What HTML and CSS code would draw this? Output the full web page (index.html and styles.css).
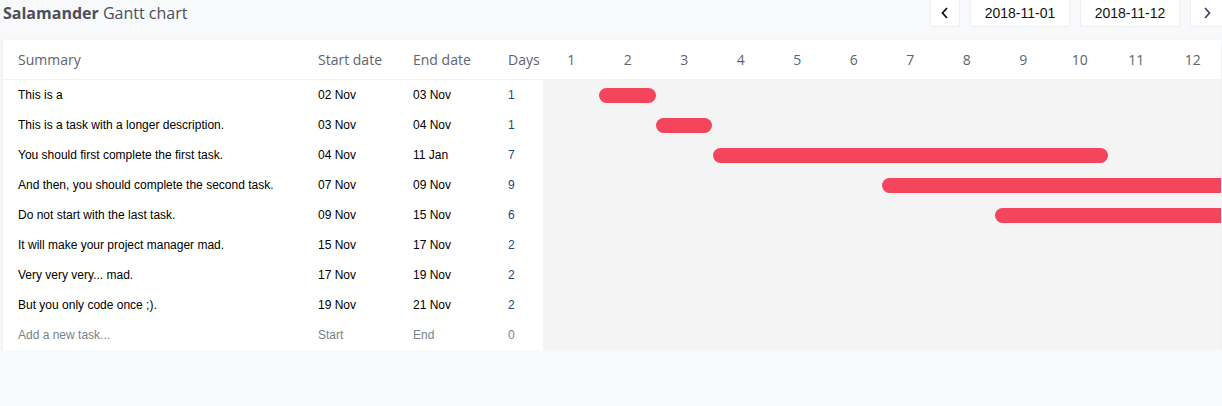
FILE: index.html
```html
<!DOCTYPE html>
<html>
<head>
<meta charset="utf-8">
<link rel="stylesheet" href="styles.css">
</head>
<body>
<div class="page">
  <div class="topbar">
    <h1 class="title"><b>Salamander</b> Gantt chart</h1>
    <div class="nav">
      <button class="btn chev chev-left" aria-label="Previous">
        <svg width="10" height="14" viewBox="0 0 10 14"><polyline points="7,2 2.5,7 7,12" fill="none" stroke="#111" stroke-width="1.8"/></svg>
      </button>
      <button class="btn date">2018-11-01</button>
      <button class="btn date">2018-11-12</button>
      <button class="btn chev chev-right" aria-label="Next">
        <svg width="10" height="14" viewBox="0 0 10 14"><polyline points="3,2 7.5,7 3,12" fill="none" stroke="#4b4a66" stroke-width="1.8"/></svg>
      </button>
    </div>
  </div>

  <div class="card">
    <div class="row head">
      <div class="cell">Summary</div>
      <div class="cell">Start date</div>
      <div class="cell">End date</div>
      <div class="cell">Days</div>
      <div class="days">
        <span>1</span><span>2</span><span>3</span><span>4</span><span>5</span><span>6</span>
        <span>7</span><span>8</span><span>9</span><span>10</span><span>11</span><span>12</span>
      </div>
    </div>

    <div class="row task">
      <div class="cell">This is a</div>
      <div class="cell">02 Nov</div>
      <div class="cell">03 Nov</div>
      <div class="cell num">1</div>
      <div class="track"><div class="bar" style="margin-left:8.3333%;width:8.3333%"></div></div>
    </div>
    <div class="row task">
      <div class="cell">This is a task with a longer description.</div>
      <div class="cell">03 Nov</div>
      <div class="cell">04 Nov</div>
      <div class="cell num">1</div>
      <div class="track"><div class="bar" style="margin-left:16.6667%;width:8.3333%"></div></div>
    </div>
    <div class="row task">
      <div class="cell">You should first complete the first task.</div>
      <div class="cell">04 Nov</div>
      <div class="cell">11 Jan</div>
      <div class="cell num">7</div>
      <div class="track"><div class="bar" style="margin-left:25%;width:58.3333%"></div></div>
    </div>
    <div class="row task">
      <div class="cell">And then, you should complete the second task.</div>
      <div class="cell">07 Nov</div>
      <div class="cell">09 Nov</div>
      <div class="cell num">9</div>
      <div class="track"><div class="bar" style="margin-left:50%;width:75%"></div></div>
    </div>
    <div class="row task">
      <div class="cell">Do not start with the last task.</div>
      <div class="cell">09 Nov</div>
      <div class="cell">15 Nov</div>
      <div class="cell num">6</div>
      <div class="track"><div class="bar" style="margin-left:66.6667%;width:50%"></div></div>
    </div>
    <div class="row task">
      <div class="cell">It will make your project manager mad.</div>
      <div class="cell">15 Nov</div>
      <div class="cell">17 Nov</div>
      <div class="cell num">2</div>
      <div class="track"></div>
    </div>
    <div class="row task">
      <div class="cell">Very very very... mad.</div>
      <div class="cell">17 Nov</div>
      <div class="cell">19 Nov</div>
      <div class="cell num">2</div>
      <div class="track"></div>
    </div>
    <div class="row task">
      <div class="cell">But you only code once ;).</div>
      <div class="cell">19 Nov</div>
      <div class="cell">21 Nov</div>
      <div class="cell num">2</div>
      <div class="track"></div>
    </div>
    <div class="row task add">
      <div class="cell">Add a new task...</div>
      <div class="cell">Start</div>
      <div class="cell">End</div>
      <div class="cell">0</div>
      <div class="track"></div>
    </div>
  </div>
</div>
</body>
</html>
```

FILE: styles.css
```css
html, body {
  margin: 0;
  padding: 0;
  background: #f8f9fb;
}

.page {
  padding: 0 0 0 3px;
}

.topbar {
  display: flex;
  justify-content: space-between;
  align-items: flex-start;
  height: 27px;
  margin-bottom: 13px;
}

.title {
  margin: 0;
  font-family: "Open Sans", sans-serif;
  font-size: 16px;
  font-weight: 400;
  line-height: 27px;
  color: #4b4f5c;
}

.title b {
  font-weight: 700;
}

.nav {
  display: flex;
  gap: 10px;
}

.btn {
  height: 27px;
  margin: 0;
  padding: 0;
  background: #fff;
  border: 1px solid #eeeff2;
  border-top: 0;
  font-family: "Liberation Sans", Arial, sans-serif;
  font-size: 14px;
  color: #111;
  display: flex;
  align-items: center;
  justify-content: center;
}

.chev {
  width: 30px;
}

.chev-right {
  width: 32px;
  border-right: 0;
}

.date {
  width: 100px;
}

.card {
  width: 1218px;
  background: #fff;
  box-shadow: 0 2px 5px rgba(0, 0, 0, 0.07);
}

.row {
  display: grid;
  grid-template-columns: 300px 95px 95px 50px 1fr;
}

.row.head {
  height: 39px;
  border-bottom: 1px solid #f2f2f2;
  font-family: "Open Sans", sans-serif;
  font-size: 14px;
  color: #5d6472;
}

.row.head .cell {
  line-height: 39px;
}

.cell {
  padding-left: 15px;
  white-space: nowrap;
  overflow: hidden;
}

.days {
  display: grid;
  grid-template-columns: repeat(12, 1fr);
  line-height: 39px;
  text-align: center;
}

.row.task {
  height: 30px;
  font-family: "Liberation Sans", Arial, sans-serif;
  font-size: 12px;
  color: #000;
}

.row.task .cell {
  line-height: 30px;
}

.num {
  color: #17497d;
}

.row.add {
  color: #7b7f87;
}

.track {
  background: #f4f4f4;
  overflow: hidden;
  display: flex;
  align-items: center;
}

.bar {
  flex: none;
  height: 15px;
  border-radius: 8px;
  background: #f5455c;
}
```
